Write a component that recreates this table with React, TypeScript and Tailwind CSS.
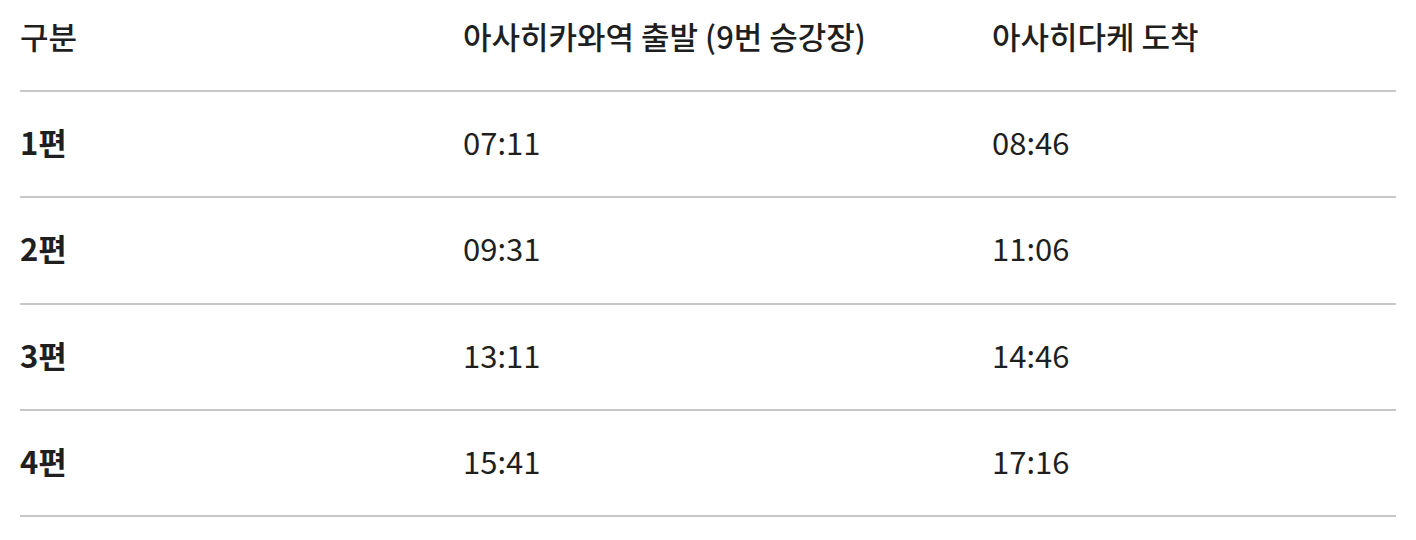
const rows = [
  { name: '1편', depart: '07:11', arrive: '08:46' },
  { name: '2편', depart: '09:31', arrive: '11:06' },
  { name: '3편', depart: '13:11', arrive: '14:46' },
  { name: '4편', depart: '15:41', arrive: '17:16' },
]

export default function App() {
  return (
    <div
      className="min-h-[540px] bg-white px-5 text-[#1f1f1f]"
      style={{ fontFamily: '"Noto Sans CJK KR", "Noto Sans", sans-serif' }}
    >
      <div className="grid h-[92px] grid-cols-[443px_529px_1fr] items-center border-b-2 border-[#c7c7c7] pb-[20px] text-[31px] font-medium leading-none">
        <div>구분</div>
        <div>아사히카와역 출발 (9번 승강장)</div>
        <div>아사히다케 도착</div>
      </div>
      {rows.map((row) => (
        <div
          key={row.name}
          className="grid h-[106.3px] grid-cols-[443px_529px_1fr] items-center border-b-2 border-[#c7c7c7] pb-[5px] text-[31px] leading-none"
        >
          <div className="font-bold">{row.name}</div>
          <div>{row.depart}</div>
          <div>{row.arrive}</div>
        </div>
      ))}
    </div>
  )
}
